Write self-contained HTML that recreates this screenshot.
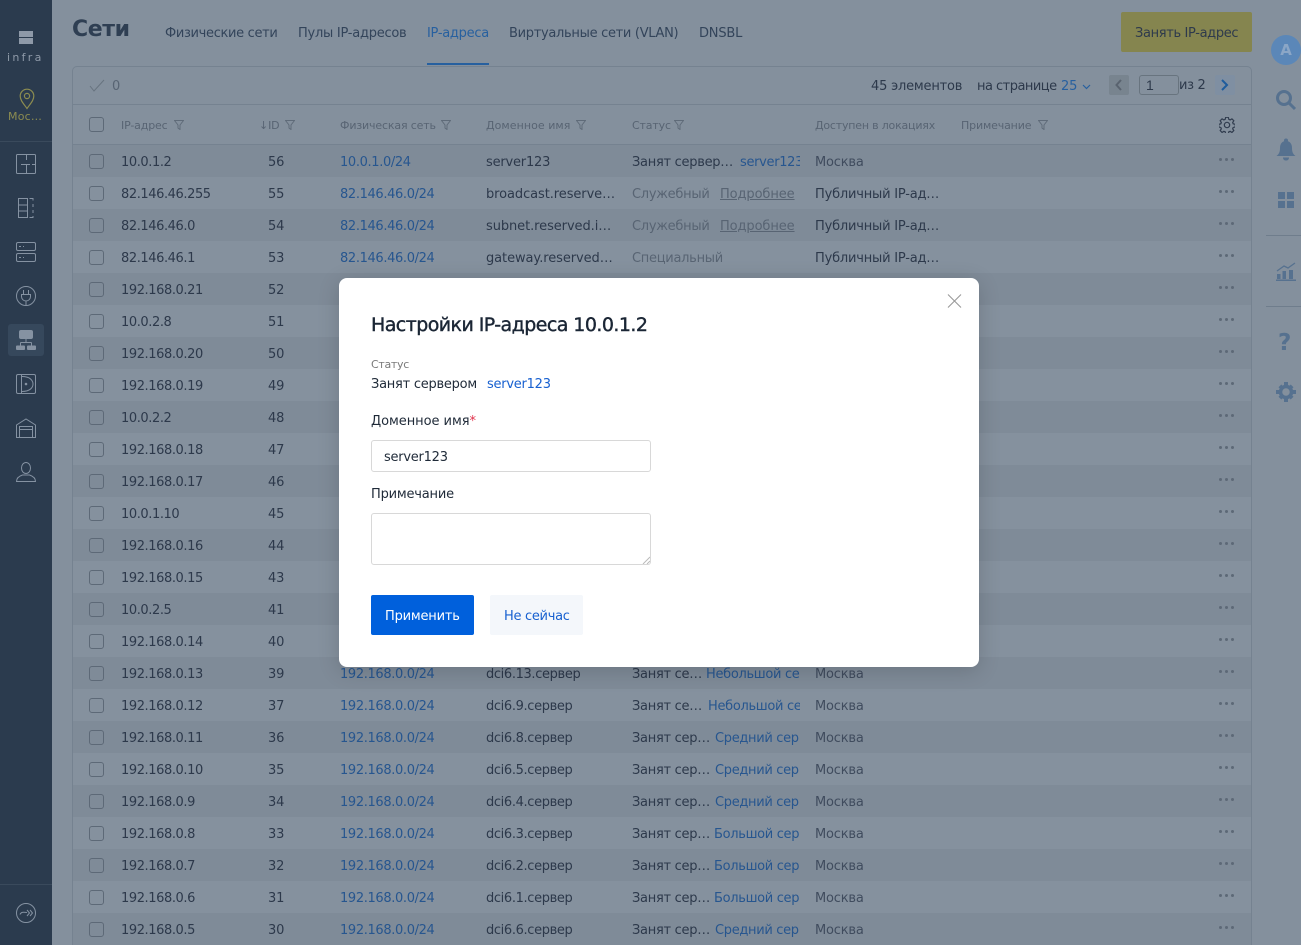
<!DOCTYPE html>
<html lang="ru"><head><meta charset="utf-8"><title>Сети</title>
<style>
*{box-sizing:border-box}
html,body{margin:0;padding:0;width:1301px;height:945px;overflow:hidden;background:#84909d}
body{font-family:"DejaVu Sans","Liberation Sans",sans-serif;font-size:13px;color:#2d394b;position:relative}
.a{position:absolute;white-space:nowrap;line-height:18px}
#side{position:absolute;left:0;top:0;width:52px;height:945px;background:#2b3b4e}
.card{position:absolute;left:72px;top:66px;width:1180px;height:900px;border:1px solid #758290;border-radius:5px}
.line{position:absolute;left:73px;width:1178px;height:1px;background:#758290}
.r{position:absolute;left:73px;width:1178px;height:32px}
.d{background:#7f8b98}.l{background:#85919e}
.r span{position:absolute;top:7px;line-height:18px;white-space:nowrap;letter-spacing:-.2px;margin-top:2px}
.cb{position:absolute;left:16px;top:9px;width:15px;height:15px;border:1px solid #5d6977;border-radius:3px}
.r .ip{left:48px;letter-spacing:-.42px}.id{left:195px}.r .net{left:267px;color:#27568f;letter-spacing:-.36px}.dom{left:413px}.r .dn{letter-spacing:-.36px}.r .w{letter-spacing:-.08px}.r .st{left:559px;letter-spacing:-.28px}.loc{left:742px}
.r .lk{color:#27568f;overflow:hidden;letter-spacing:-.32px}
.r .g{color:#586473}
.m{color:#404c5e}
.r .dots{left:1146px;top:13px;margin:0;width:3px;height:3px;border-radius:50%;background:#5d6977;box-shadow:6px 0 #5d6977,12px 0 #5d6977}
.h{position:absolute;top:117px;font-size:11px;line-height:18px;color:#586473;white-space:nowrap;letter-spacing:-.15px}
.f{position:absolute;top:120px}
.tab{position:absolute;top:25px;line-height:18px;white-space:nowrap;color:#33445a;letter-spacing:-.33px}
#modal{position:absolute;left:339px;top:278px;width:640px;height:389px;background:#fff;border-radius:8px;box-shadow:0 4px 22px rgba(0,0,0,.16);color:#1f2a38}
#modal .a{letter-spacing:-.2px}
.inp{position:absolute;left:32px;width:280px;border:1px solid #d8d8d8;border-radius:3px;background:#fff}
</style></head><body>

<div class="a" style="left:72px;top:15px;font-size:22px;line-height:30px;font-weight:bold;color:#2f3f53;letter-spacing:-.4px">Сети</div>
<div class="tab" style="left:165px">Физические сети</div>
<div class="tab" style="left:298px;letter-spacing:-.25px">Пулы IP-адресов</div>
<div class="tab" style="left:427px;color:#27609f;letter-spacing:-.28px">IP-адреса</div>
<div class="tab" style="left:509px;letter-spacing:-.3px">Виртуальные сети (VLAN)</div>
<div class="tab" style="left:699px;letter-spacing:-.2px">DNSBL</div>
<div style="position:absolute;left:427px;top:63px;width:62px;height:2px;background:#27609f"></div>
<div style="position:absolute;left:1121px;top:12px;width:131px;height:40px;background:#85854f;border-radius:2px"></div>
<div class="a" style="left:1135px;top:25px;color:#2e3a4c;letter-spacing:-.35px">Занять IP-адрес</div>

<div class="card"></div>
<div class="line" style="top:104px"></div>
<div class="line" style="top:144px"></div>

<svg style="position:absolute;left:89px;top:79px" width="16" height="13" viewBox="0 0 16 13"><path d="M1 7l4 5L15 1" fill="none" stroke="#67737f" stroke-width="1"/></svg>
<div class="a" style="left:112px;top:78px;color:#586473">0</div>
<div class="a" style="left:871px;top:78px;letter-spacing:-.2px">45 элементов</div>
<div class="a" style="left:977px;top:78px;letter-spacing:-.52px">на странице</div>
<div class="a" style="left:1061px;top:78px;color:#27609f;letter-spacing:-.2px">25</div>
<svg style="position:absolute;left:1082px;top:84px" width="9" height="6" viewBox="0 0 9 6"><path d="M1 1l3.500 3.500L8 1" fill="none" stroke="#27609f" stroke-width="1.200"/></svg>
<div style="position:absolute;left:1109px;top:75px;width:20px;height:20px;background:#78848f;border-radius:2px"></div>
<svg style="position:absolute;left:1115px;top:79px" width="8" height="12" viewBox="0 0 8 12"><path d="M6 1L1.500 6 6 11" fill="none" stroke="#59636f" stroke-width="2"/></svg>
<div style="position:absolute;left:1139px;top:75px;width:40px;height:20px;border:1px solid #68747f;border-radius:3px"></div>
<div class="a" style="left:1146px;top:76px;font-family:'Liberation Sans',sans-serif;font-size:14px">1</div>
<div class="a" style="left:1179px;top:76px;letter-spacing:-.35px;line-height:19px">из 2</div>
<div style="position:absolute;left:1215px;top:75px;width:20px;height:20px;background:#7f8fa2;border-radius:2px"></div>
<svg style="position:absolute;left:1220px;top:79px" width="9" height="12" viewBox="0 0 9 12"><path d="M2 1l5 5-5 5" fill="none" stroke="#1f5c9c" stroke-width="2"/></svg>

<div style="position:absolute;left:89px;top:117px;width:15px;height:15px;border:1px solid #5d6977;border-radius:3px"></div>
<div class="h" style="left:121px">IP-адрес</div>
<div class="h" style="left:259px">↓ID</div>
<div class="h" style="left:340px">Физическая сеть</div>
<div class="h" style="left:486px;letter-spacing:.05px">Доменное имя</div>
<div class="h" style="left:632px">Статус</div>
<div class="h" style="left:815px;letter-spacing:-.2px">Доступен в локациях</div>
<div class="h" style="left:961px">Примечание</div>
<svg class="f" style="left:174px" width="10" height="10" viewBox="0 0 10 10"><path d="M.5 .5h9L6 5v4.500L4 8V5z" fill="none" stroke="#5f6b79"/></svg>
<svg class="f" style="left:285px" width="10" height="10" viewBox="0 0 10 10"><path d="M.5 .5h9L6 5v4.500L4 8V5z" fill="none" stroke="#5f6b79"/></svg>
<svg class="f" style="left:441px" width="10" height="10" viewBox="0 0 10 10"><path d="M.5 .5h9L6 5v4.500L4 8V5z" fill="none" stroke="#5f6b79"/></svg>
<svg class="f" style="left:576px" width="10" height="10" viewBox="0 0 10 10"><path d="M.5 .5h9L6 5v4.500L4 8V5z" fill="none" stroke="#5f6b79"/></svg>
<svg class="f" style="left:674px" width="10" height="10" viewBox="0 0 10 10"><path d="M.5 .5h9L6 5v4.500L4 8V5z" fill="none" stroke="#5f6b79"/></svg>
<svg class="f" style="left:1038px" width="10" height="10" viewBox="0 0 10 10"><path d="M.5 .5h9L6 5v4.500L4 8V5z" fill="none" stroke="#5f6b79"/></svg>
<svg style="position:absolute;left:1219px;top:117px" width="16" height="16" viewBox="0 0 24 24"><g fill="none" stroke="#303c4e" stroke-width="1.800"><path d="M10 1.500h4l.7 3 2 .9 2.700-1.600 2.800 2.800-1.700 2.700.8 2 3.100.7v4l-3.100.7-.8 2 1.700 2.700-2.800 2.800-2.700-1.700-2 .8-.7 3.100h-4l-.7-3.100-2-.8-2.700 1.700-2.800-2.800 1.700-2.700-.8-2-3.100-.7v-4l3.100-.7.8-2-1.700-2.700 2.800-2.800 2.700 1.600 2-.9z" transform="translate(0 -1)"/><circle cx="12" cy="12" r="4"/></g></svg>

<!-- rows -->
<div class="r d" style="top:145px"><i class="cb"></i><span class="ip">10.0.1.2</span><span class="id">56</span><span class="net">10.0.1.0/24</span><span class="dom">server123</span><span class="st">Занят сервер…</span><span class="lk" style="left:667px;width:60px">server123</span><span class="loc m">Москва</span><span class="dots"></span></div>
<div class="r l" style="top:177px"><i class="cb"></i><span class="ip">82.146.46.255</span><span class="id">55</span><span class="net">82.146.46.0/24</span><span class="dom w">broadcast.reserve…</span><span class="st g">Служебный</span><span class="g" style="left:647px;text-decoration:underline;letter-spacing:-.1px">Подробнее</span><span class="loc">Публичный IP-ад…</span><span class="dots"></span></div>
<div class="r d" style="top:209px"><i class="cb"></i><span class="ip">82.146.46.0</span><span class="id">54</span><span class="net">82.146.46.0/24</span><span class="dom w">subnet.reserved.i…</span><span class="st g">Служебный</span><span class="g" style="left:647px;text-decoration:underline;letter-spacing:-.1px">Подробнее</span><span class="loc">Публичный IP-ад…</span><span class="dots"></span></div>
<div class="r l" style="top:241px"><i class="cb"></i><span class="ip">82.146.46.1</span><span class="id">53</span><span class="net">82.146.46.0/24</span><span class="dom w">gateway.reserved…</span><span class="st g">Специальный</span><span class="loc">Публичный IP-ад…</span><span class="dots"></span></div>
<div class="r d" style="top:273px"><i class="cb"></i><span class="ip">192.168.0.21</span><span class="id">52</span><span class="dots"></span></div>
<div class="r l" style="top:305px"><i class="cb"></i><span class="ip">10.0.2.8</span><span class="id">51</span><span class="dots"></span></div>
<div class="r d" style="top:337px"><i class="cb"></i><span class="ip">192.168.0.20</span><span class="id">50</span><span class="dots"></span></div>
<div class="r l" style="top:369px"><i class="cb"></i><span class="ip">192.168.0.19</span><span class="id">49</span><span class="dots"></span></div>
<div class="r d" style="top:401px"><i class="cb"></i><span class="ip">10.0.2.2</span><span class="id">48</span><span class="dots"></span></div>
<div class="r l" style="top:433px"><i class="cb"></i><span class="ip">192.168.0.18</span><span class="id">47</span><span class="dots"></span></div>
<div class="r d" style="top:465px"><i class="cb"></i><span class="ip">192.168.0.17</span><span class="id">46</span><span class="dots"></span></div>
<div class="r l" style="top:497px"><i class="cb"></i><span class="ip">10.0.1.10</span><span class="id">45</span><span class="dots"></span></div>
<div class="r d" style="top:529px"><i class="cb"></i><span class="ip">192.168.0.16</span><span class="id">44</span><span class="dots"></span></div>
<div class="r l" style="top:561px"><i class="cb"></i><span class="ip">192.168.0.15</span><span class="id">43</span><span class="dots"></span></div>
<div class="r d" style="top:593px"><i class="cb"></i><span class="ip">10.0.2.5</span><span class="id">41</span><span class="dots"></span></div>
<div class="r l" style="top:625px"><i class="cb"></i><span class="ip">192.168.0.14</span><span class="id">40</span><span class="dots"></span></div>
<div class="r d" style="top:657px"><i class="cb"></i><span class="ip">192.168.0.13</span><span class="id">39</span><span class="net">192.168.0.0/24</span><span class="dom dn">dci6.13.сервер</span><span class="st">Занят се…</span><span class="lk" style="left:633px;width:94px">Небольшой сервер</span><span class="loc m">Москва</span><span class="dots"></span></div>
<div class="r l" style="top:689px"><i class="cb"></i><span class="ip">192.168.0.12</span><span class="id">37</span><span class="net">192.168.0.0/24</span><span class="dom dn">dci6.9.сервер</span><span class="st">Занят се…</span><span class="lk" style="left:635px;width:92px">Небольшой сервер</span><span class="loc m">Москва</span><span class="dots"></span></div>
<div class="r d" style="top:721px"><i class="cb"></i><span class="ip">192.168.0.11</span><span class="id">36</span><span class="net">192.168.0.0/24</span><span class="dom dn">dci6.8.сервер</span><span class="st">Занят сер…</span><span class="lk" style="left:642px;width:84px">Средний сервер</span><span class="loc m">Москва</span><span class="dots"></span></div>
<div class="r l" style="top:753px"><i class="cb"></i><span class="ip">192.168.0.10</span><span class="id">35</span><span class="net">192.168.0.0/24</span><span class="dom dn">dci6.5.сервер</span><span class="st">Занят сер…</span><span class="lk" style="left:642px;width:84px">Средний сервер</span><span class="loc m">Москва</span><span class="dots"></span></div>
<div class="r d" style="top:785px"><i class="cb"></i><span class="ip">192.168.0.9</span><span class="id">34</span><span class="net">192.168.0.0/24</span><span class="dom dn">dci6.4.сервер</span><span class="st">Занят сер…</span><span class="lk" style="left:642px;width:84px">Средний сервер</span><span class="loc m">Москва</span><span class="dots"></span></div>
<div class="r l" style="top:817px"><i class="cb"></i><span class="ip">192.168.0.8</span><span class="id">33</span><span class="net">192.168.0.0/24</span><span class="dom dn">dci6.3.сервер</span><span class="st">Занят сер…</span><span class="lk" style="left:641px;width:86px">Большой сервер</span><span class="loc m">Москва</span><span class="dots"></span></div>
<div class="r d" style="top:849px"><i class="cb"></i><span class="ip">192.168.0.7</span><span class="id">32</span><span class="net">192.168.0.0/24</span><span class="dom dn">dci6.2.сервер</span><span class="st">Занят сер…</span><span class="lk" style="left:641px;width:86px">Большой сервер</span><span class="loc m">Москва</span><span class="dots"></span></div>
<div class="r l" style="top:881px"><i class="cb"></i><span class="ip">192.168.0.6</span><span class="id">31</span><span class="net">192.168.0.0/24</span><span class="dom dn">dci6.1.сервер</span><span class="st">Занят сер…</span><span class="lk" style="left:641px;width:86px">Большой сервер</span><span class="loc m">Москва</span><span class="dots"></span></div>
<div class="r d" style="top:913px"><i class="cb"></i><span class="ip">192.168.0.5</span><span class="id">30</span><span class="net">192.168.0.0/24</span><span class="dom dn">dci6.6.сервер</span><span class="st">Занят сер…</span><span class="lk" style="left:642px;width:84px">Средний сервер</span><span class="loc m">Москва</span><span class="dots"></span></div>

<!-- sidebar -->
<div id="side">
<div style="position:absolute;left:19px;top:31px;width:14px;height:6px;background:#8e99a8"></div>
<div style="position:absolute;left:19px;top:38px;width:14px;height:6px;background:#8e99a8"></div>
<div class="a" style="left:7px;top:49px;font-size:11px;color:#8e99a8;letter-spacing:2.300px">infra</div>
<svg style="position:absolute;left:18px;top:88px" width="18" height="22" viewBox="0 0 18 22" fill="none" stroke="#8c8c50" stroke-width="1.200"><path d="M9 20.500C5 15 2.200 12 2.200 8a6.800 6.800 0 0 1 13.600 0c0 4-2.800 7-6.800 12.500z"/><circle cx="9" cy="8" r="2.600"/></svg>
<div class="a" style="left:8px;top:108px;font-size:11px;color:#8c8c50;letter-spacing:.2px">Мос…</div>
<div style="position:absolute;left:0;top:141px;width:52px;height:1px;background:#3a4a5c"></div>
<div style="position:absolute;left:8px;top:324px;width:36px;height:32px;background:#36485c;border-radius:3px"></div>
<svg style="position:absolute;left:0;top:140px" width="52" height="360" viewBox="0 140 52 360" fill="none" stroke="#8592a2" stroke-width="1">
<rect x="16.500" y="154.500" width="19" height="19" rx="1"/><path d="M26.500 154v6M26.500 173v-9M21 164.500h9M32 164.500h4"/>
<path d="M18.500 198.500h9v19h-9zM18.500 205h9M18.500 211h9M29.500 198.500h3.500v2M33 204v3M33 210v3M33 216v1.500h-3.500"/>
<rect x="16.500" y="242.500" width="19" height="8" rx="1.500"/><rect x="16.500" y="253.500" width="19" height="8" rx="1.500"/><path d="M19 246.500h2M23 246.500h1M19 257.500h2M23 257.500h1"/>
<circle cx="26" cy="296" r="9.500"/><path d="M23.500 290v4M28.500 290v4M21.500 294.500h9v2a4.500 4.500 0 0 1-9 0zM26 301v5"/>
<rect x="19" y="330" width="14" height="9" rx="2" fill="#8592a2" stroke="none"/>
<path d="M26 339v3M20.500 342.500h11M20.500 342.500v3M31.500 342.500v3"/>
<rect x="16" y="345.500" width="9" height="4.500" rx="1" fill="#8592a2" stroke="none"/><rect x="27" y="345.500" width="9" height="4.500" rx="1" fill="#8592a2" stroke="none"/>
<rect x="16.500" y="374.500" width="19" height="19" rx="1.500"/><path d="M21.500 374.500v19M22 376.500c8 0 11 4 11 7.500s-3 7.500-11 7.500"/><circle cx="26" cy="384" r=".8" fill="#8592a2"/>
<path d="M16.500 425l9.500-6 9.500 6v12.500h-19zM19.500 437.500v-11h13v11M19.500 429.500h13"/>
<ellipse cx="26" cy="468" rx="4.500" ry="5.500"/><path d="M16.500 481.500c0-3.500 3-5.500 6-6.500h7c3 1 6 3 6 6.500z"/>
</svg>
<div style="position:absolute;left:0;top:884px;width:52px;height:1px;background:#3a4a5c"></div>
<svg style="position:absolute;left:15px;top:902px" width="22" height="22" viewBox="0 0 22 22" fill="none" stroke="#8592a2"><circle cx="11" cy="11" r="9.500"/><path d="M5 12.500c1-2.500 3-2.500 7-2M12 8l2.500 3-2.500 3M15 8l2.500 3-2.500 3"/></svg>
</div>

<!-- right rail -->
<div style="position:absolute;left:1271px;top:35px;width:30px;height:30px;border-radius:50%;background:#5b87b8;color:#8ba6c6;font-weight:bold;font-size:15px;line-height:30px;text-align:center">A</div>
<svg style="position:absolute;left:1275px;top:89px" width="22" height="22" viewBox="0 0 22 22" fill="none" stroke="#56718f" stroke-width="3"><circle cx="9" cy="9" r="6.500"/><path d="M14 14l6 6"/></svg>
<svg style="position:absolute;left:1276px;top:138px" width="20" height="24" viewBox="0 0 20 24" fill="#56718f"><circle cx="10" cy="2.500" r="2"/><path d="M10 3c4 0 6 3 6 7 0 4 1 6 3.500 8h-19C3 16 4 14 4 10c0-4 2-7 6-7z"/><path d="M7 19.500h6c0 2-1.300 3-3 3s-3-1-3-3z"/></svg>
<svg style="position:absolute;left:1278px;top:192px" width="16" height="16" fill="#56718f"><rect width="7" height="7"/><rect x="9" width="7" height="7"/><rect y="9" width="7" height="7"/><rect x="9" y="9" width="7" height="7"/></svg>
<div style="position:absolute;left:1266px;top:235px;width:35px;height:1px;background:#6f7d8c"></div>
<svg style="position:absolute;left:1276px;top:261px" width="20" height="20" viewBox="0 0 20 20" fill="#56718f"><rect x="1" y="13" width="3.500" height="5"/><rect x="6.500" y="10" width="3.500" height="8"/><rect x="13" y="9" width="4" height="9"/><rect y="18.500" width="20" height="1.500"/><path d="M1 10l7-5 4 2 7-5" fill="none" stroke="#56718f" stroke-width="1.300"/></svg>
<div style="position:absolute;left:1266px;top:306px;width:35px;height:1px;background:#6f7d8c"></div>
<div class="a" style="left:1278px;top:331px;font-size:23px;line-height:24px;font-weight:bold;color:#56718f">?</div>
<svg style="position:absolute;left:1276px;top:382px" width="20" height="20" viewBox="0 0 20 20"><circle cx="10" cy="10" r="5.500" fill="none" stroke="#56718f" stroke-width="3.500"/><path d="M8 0h4v4H8zM8 16h4v4H8zM0 8h4v4H0zM16 8h4v4h-4zM2.500 5.300l2.800-2.800 2 2-2.800 2.800zM12.700 15.500l2.800-2.800 2 2-2.800 2.800zM14.700 2.500l2.800 2.800-2 2-2.800-2.800zM4.500 12.700l2.800 2.800-2 2-2.800-2.800z" fill="#56718f"/></svg>

<!-- modal -->
<div id="modal">
<svg style="position:absolute;left:608px;top:16px" width="15" height="14" viewBox="0 0 15 14"><path d="M1 .5l13 13M14 .5L1 13.500" stroke="#999" stroke-width="1.100" fill="none"/></svg>
<div class="a" style="left:32px;top:35px;font-size:19px;line-height:24px;color:#1b2635;-webkit-text-stroke:.4px #1b2635;letter-spacing:-.56px!important">Настройки IP-адреса 10.0.1.2</div>
<div class="a" style="left:32px;top:78px;font-size:11px;color:#7a7a7a;letter-spacing:-.3px">Статус</div>
<div class="a" style="left:32px;top:98px;letter-spacing:-.25px">Занят сервером</div>
<div class="a" style="left:148px;top:98px;color:#1760d0;letter-spacing:-.25px">server123</div>
<div class="a" style="left:32px;top:133px;line-height:22px;letter-spacing:-.05px">Доменное имя<span style="color:#e0304a">*</span></div>
<div class="inp" style="top:162px;height:32px"></div>
<div class="a" style="left:45px;top:171px;letter-spacing:-.25px">server123</div>
<div class="a" style="left:32px;top:208px">Примечание</div>
<div class="inp" style="top:235px;height:52px"></div>
<svg style="position:absolute;left:303px;top:278px" width="8" height="8" viewBox="0 0 8 8"><path d="M1 8l7-7M5 8l3-3" stroke="#bbb" fill="none"/></svg>
<div style="position:absolute;left:32px;top:317px;width:103px;height:40px;background:#0060dc;border-radius:2px"></div>
<div class="a" style="left:46px;top:330px;color:#fff;letter-spacing:-.2px">Применить</div>
<div style="position:absolute;left:151px;top:317px;width:93px;height:40px;background:#f4f7fb;border-radius:2px"></div>
<div class="a" style="left:165px;top:330px;color:#1760d0;letter-spacing:-.3px">Не сейчас</div>
</div>
</body></html>
